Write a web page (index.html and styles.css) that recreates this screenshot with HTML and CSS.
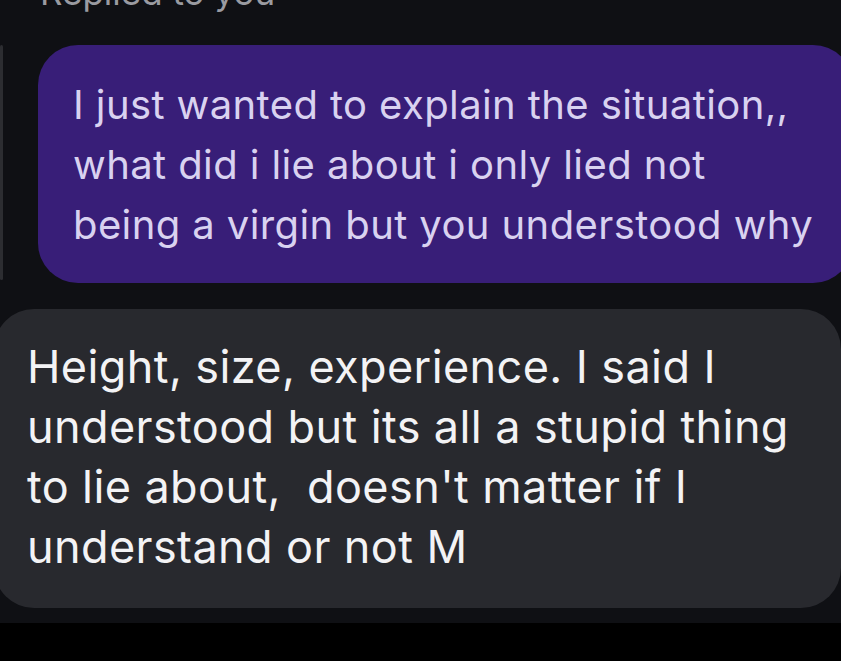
FILE: index.html
```html
<!DOCTYPE html>
<html>
<head>
<meta charset="utf-8">
<link rel="stylesheet" href="styles.css">
</head>
<body>
<div class="screen">
  <div class="reply-label">Replied to you</div>
  <div class="reply-row">
    <div class="reply-bar"></div>
    <div class="bubble bubble-purple">I just wanted to explain the situation,,<br>what did i lie about i only lied not<br>being a virgin but you understood why</div>
  </div>
  <div class="bubble bubble-gray">Height, size, experience. I said I<br>understood but its all a stupid thing<br>to lie about,&nbsp; doesn't matter if I<br>understand or not M</div>
</div>
</body>
</html>
```
FILE: styles.css
```css
html, body {
  margin: 0;
  padding: 0;
  background: #000;
  overflow: hidden;
  width: 841px;
  height: 661px;
}
.screen {
  height: 623px;
  background: #0f1014;
  overflow: hidden;
  font-family: Inter, "Noto Sans", sans-serif;
}
.reply-label {
  color: #9a9ba1;
  font-size: 35px;
  line-height: 40px;
  margin-top: -28px;
  padding-left: 40px;
  height: 40px;
  margin-bottom: 33px;
}
.reply-row {
  display: flex;
  align-items: flex-start;
}
.reply-bar {
  width: 3px;
  height: 235px;
  background: #2c2d31;
  border-radius: 2px;
  flex: none;
}
.bubble {
  line-height: 60px;
  white-space: nowrap;
  letter-spacing: 0.4px;
}
.bubble-purple {
  font-size: 40px;
  margin-left: 35px;
  margin-right: -12px;
  flex: 1;
  background: #381e78;
  color: #d9d2f0;
  border-radius: 40px;
  padding: 30px 0 28px 35px;
  height: 180px;
}
.bubble-gray {
  font-size: 45px;
  margin-top: 26px;
  margin-left: -6px;
  margin-right: 0;
  background: #28292e;
  color: #f3f3f5;
  border-radius: 40px;
  padding: 28px 0 31px 33px;
  height: 240px;
}
```
